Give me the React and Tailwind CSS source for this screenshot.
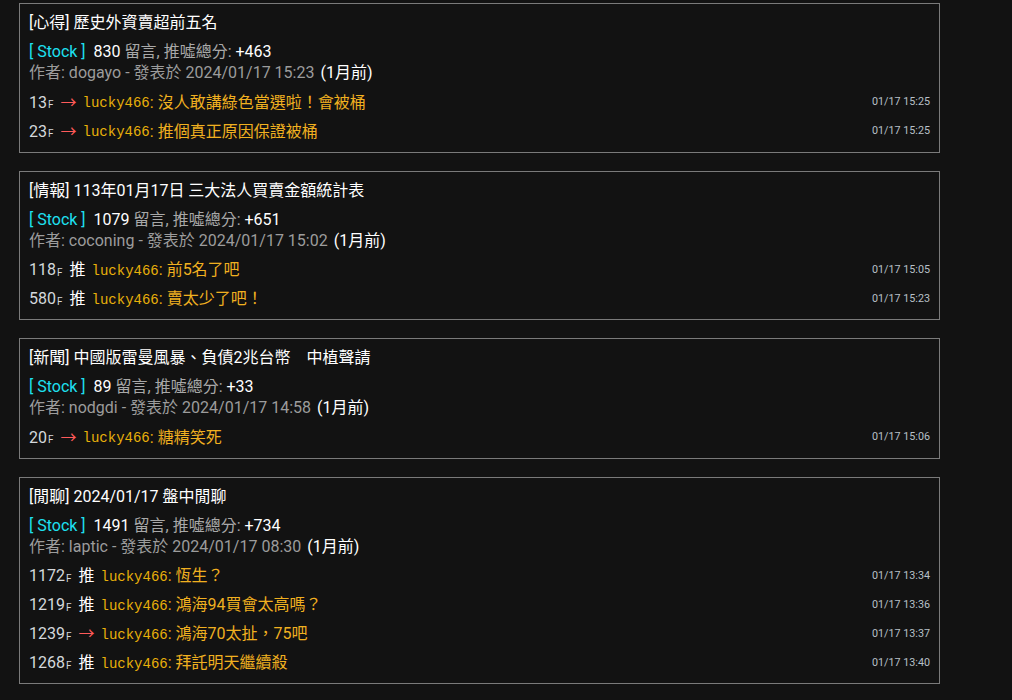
import React from 'react'

const posts = [
  {
    title: '[心得] 歷史外資賣超前五名',
    count: 830,
    score: '+463',
    author: 'dogayo',
    date: '2024/01/17 15:23',
    comments: [
      { floor: 13, tag: 'arrow', text: '沒人敢講綠色當選啦！會被桶', time: '01/17 15:25' },
      { floor: 23, tag: 'arrow', text: '推個真正原因保證被桶', time: '01/17 15:25' },
    ],
  },
  {
    title: '[情報] 113年01月17日 三大法人買賣金額統計表',
    count: 1079,
    score: '+651',
    author: 'coconing',
    date: '2024/01/17 15:02',
    comments: [
      { floor: 118, tag: 'push', text: '前5名了吧', time: '01/17 15:05' },
      { floor: 580, tag: 'push', text: '賣太少了吧！', time: '01/17 15:23' },
    ],
  },
  {
    title: '[新聞] 中國版雷曼風暴、負債2兆台幣\u3000中植聲請',
    count: 89,
    score: '+33',
    author: 'nodgdi',
    date: '2024/01/17 14:58',
    comments: [
      { floor: 20, tag: 'arrow', text: '糖精笑死', time: '01/17 15:06' },
    ],
  },
  {
    title: '[閒聊] 2024/01/17 盤中閒聊',
    count: 1491,
    score: '+734',
    author: 'laptic',
    date: '2024/01/17 08:30',
    comments: [
      { floor: 1172, tag: 'push', text: '恆生？', time: '01/17 13:34' },
      { floor: 1219, tag: 'push', text: '鴻海94買會太高嗎？', time: '01/17 13:36' },
      { floor: 1239, tag: 'arrow', text: '鴻海70太扯，75吧', time: '01/17 13:37' },
      { floor: 1268, tag: 'push', text: '拜託明天繼續殺', time: '01/17 13:40' },
    ],
  },
]

function Comment({ c }) {
  return (
    <div className="flex items-center h-[29px]">
      <span className="text-[16px] text-[#d4d8dc]">{c.floor}</span>
      <span className="text-[10px] text-[#d4d8dc] mt-[4px] ml-[1px] mr-[7px]">F</span>
      {c.tag === 'arrow' ? (
        <span className="text-[16px] text-[#ff5a5a] mr-[6px]">→</span>
      ) : (
        <span className="text-[16px] text-white mr-[6px]">推</span>
      )}
      <span className="text-[14px] text-[#e8b00a] mt-[2px]" style={{ fontFamily: '"Liberation Mono", "DejaVu Sans Mono", monospace' }}>lucky466</span>
      <span className="text-[16px] text-[#e8b00a] mr-[4px]">:</span>
      <span className="text-[16px] text-[#f0b020]">{c.text}</span>
      <span className="ml-auto text-[10.75px] text-[#b8c0c8]">{c.time}</span>
    </div>
  )
}

function Card({ p }) {
  return (
    <div className="border border-[#7a7a7a] pt-[7px] pb-[5.5px] pl-[9px] pr-[9px]">
      <div className="h-[24px] leading-[24px] text-[16px] text-white">{p.title}</div>
      <div className="mt-[6px] h-[21px] leading-[21px] text-[16px]">
        <span className="text-[#1ee0f0] mr-[4px]">[ Stock ]</span>
        <span className="text-white"> {p.count}</span>
        <span className="text-[#a8a8a8]"> 留言, 推噓總分: </span>
        <span className="text-white">{p.score}</span>
      </div>
      <div className="h-[21px] leading-[21px] text-[16px] text-[#9c9c9c]">
        作者: {p.author} - 發表於 {p.date} <span className="text-white ml-[2px]">(1月前)</span>
      </div>
      <div className="mt-[5px]">
        {p.comments.map((c, i) => <Comment key={i} c={c} />)}
      </div>
    </div>
  )
}

export default function App() {
  return (
    <div
      className="min-h-[700px] bg-[#121212] pt-[3px] pl-[19px]"
      style={{ fontFamily: 'Roboto, "Noto Sans CJK TC", sans-serif' }}
    >
      <div className="w-[921px] flex flex-col gap-[18px]">
        {posts.map((p, i) => <Card key={i} p={p} />)}
      </div>
    </div>
  )
}
